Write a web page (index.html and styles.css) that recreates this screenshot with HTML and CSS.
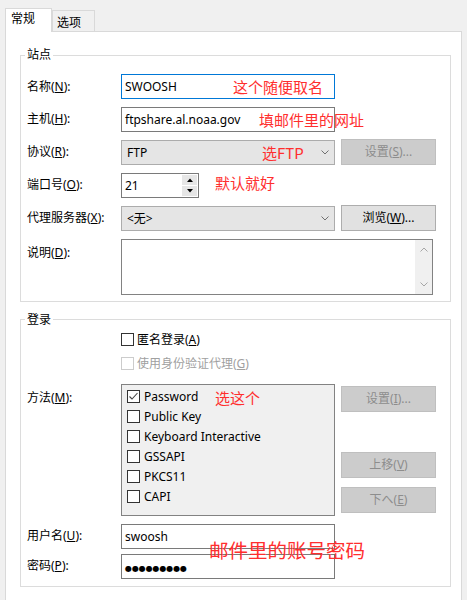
FILE: index.html
```html
<!DOCTYPE html>
<html>
	<head>
		<meta charset="UTF-8">
		<title>站点设置</title>
		<link rel="stylesheet" href="styles.css">
	</head>
	<body>
		<div class="tabs">
			<div class="tab active">常规</div>
			<div class="tab">选项</div>
		</div>

		<div class="panel">
			<!-- 站点 -->
			<fieldset class="group">
				<legend>站点</legend>
				<div class="rows site">
					<div class="row">
						<span class="lbl">名称(<u>N</u>):</span>
						<div class="field focus">SWOOSH</div>
					</div>
					<div class="row">
						<span class="lbl">主机(<u>H</u>):</span>
						<div class="field">ftpshare.al.noaa.gov</div>
					</div>
					<div class="row">
						<span class="lbl">协议(<u>R</u>):</span>
						<div class="field combo">
							<span>FTP</span>
							<svg width="8" height="5" viewBox="0 0 8 5"><polyline points="0.5,0.5 4,4 7.5,0.5" fill="none" stroke="#707070" stroke-width="1"/></svg>
						</div>
						<div class="btn off">设置(<u>S</u>)...</div>
					</div>
					<div class="row">
						<span class="lbl">端口号(<u>O</u>):</span>
						<div class="field spin">
							<span class="val">21</span>
							<span class="arrows">
								<span><svg width="6" height="4" viewBox="0 0 6 4"><polygon points="0,4 3,0.5 6,4" fill="#000"/></svg></span>
								<span><svg width="6" height="4" viewBox="0 0 6 4"><polygon points="0,0 3,3.5 6,0" fill="#000"/></svg></span>
							</span>
						</div>
					</div>
					<div class="row">
						<span class="lbl">代理服务器(<u>X</u>):</span>
						<div class="field combo">
							<span>&lt;无&gt;</span>
							<svg width="8" height="5" viewBox="0 0 8 5"><polyline points="0.5,0.5 4,4 7.5,0.5" fill="none" stroke="#707070" stroke-width="1"/></svg>
						</div>
						<div class="btn">浏览(<u>W</u>)...</div>
					</div>
					<div class="row">
						<span class="lbl top">说明(<u>D</u>):</span>
						<div class="memo">
							<div class="scroll">
								<svg width="8" height="5" viewBox="0 0 8 5"><polyline points="0.5,4.5 4,1 7.5,4.5" fill="none" stroke="#a6a6a6" stroke-width="1"/></svg>
								<svg width="8" height="5" viewBox="0 0 8 5"><polyline points="0.5,0.5 4,4 7.5,0.5" fill="none" stroke="#a6a6a6" stroke-width="1"/></svg>
							</div>
						</div>
					</div>
				</div>
			</fieldset>

			<!-- 登录 -->
			<fieldset class="group login">
				<legend>登录</legend>
				<div class="rows">
					<div class="row">
						<span></span>
						<label class="check"><span class="box"></span><span>匿名登录(<u>A</u>)</span></label>
					</div>
					<div class="row r-auth">
						<span></span>
						<label class="check off"><span class="box"></span><span>使用身份验证代理(<u>G</u>)</span></label>
					</div>
					<div class="row r-method">
						<span class="lbl top">方法(<u>M</u>):</span>
						<div class="list">
							<div class="item"><span class="box"><svg width="11" height="11" viewBox="0 0 11 11"><polyline points="1.5,5.5 4,8 9.5,2" fill="none" stroke="#444" stroke-width="1.1"/></svg></span>Password</div>
							<div class="item"><span class="box"></span>Public Key</div>
							<div class="item"><span class="box"></span>Keyboard Interactive</div>
							<div class="item"><span class="box"></span>GSSAPI</div>
							<div class="item"><span class="box"></span>PKCS11</div>
							<div class="item"><span class="box"></span>CAPI</div>
						</div>
						<div class="side">
							<div class="btn off">设置(<u>I</u>)...</div>
							<div class="btn off up">上移(<u>V</u>)</div>
							<div class="btn off down">下へ(<u>E</u>)</div>
						</div>
					</div>
					<div class="row r-user">
						<span class="lbl">用户名(<u>U</u>):</span>
						<div class="field">swoosh</div>
					</div>
					<div class="row r-pass">
						<span class="lbl">密码(<u>P</u>):</span>
						<div class="field"><span class="dots">●●●●●●●●●</span></div>
					</div>
				</div>
			</fieldset>
		</div>

		<!-- 红字备注 -->
		<span class="note n1">这个随便取名</span>
		<span class="note n2">填邮件里的网址</span>
		<span class="note n3">选FTP</span>
		<span class="note n4">默认就好</span>
		<span class="note n5">选这个</span>
		<span class="note n6">邮件里的账号密码</span>
	</body>
</html>
```

FILE: styles.css
```css
*{
	box-sizing:border-box;
}
body{
	margin:0;
	height:600px;
	overflow:hidden;
	background-color:#f0f0f0;
	font:12px "Noto Sans","Noto Sans CJK SC",sans-serif;
	color:#000;
}
u{
	text-decoration-thickness:1px;
	text-underline-offset:1px;
}

/* tabs */
.tabs{
	display:flex;
	align-items:flex-end;
	height:31px;
	padding:8px 0 0 5px;
}
.tab{
	height:21px;
	padding:4px 13px 0 4px;
	border:1px solid #d9d9d9;
	border-bottom:none;
	background-color:#f0f0f0;
	line-height:16px;
}
.tab.active{
	position:relative;
	z-index:1;
	height:24px;
	margin-bottom:-1px;
	padding:2px 16px 0 5px;
	background-color:#fff;
}
.panel{
	margin:0 5px;
	height:580px;
	padding:15px 10px 0 14px;
	background-color:#fff;
	border:1px solid #d9d9d9;
}

/* group boxes */
fieldset.group{
	margin:0;
	min-width:0;
	padding:11px 6px 6px 6px;
	border:1px solid #dcdcdc;
}
fieldset.group legend{
	padding:0 2px;
	margin-left:-2px;
	line-height:16px;
}
fieldset.login{
	margin-top:10px;
	padding-top:3px;
	padding-bottom:7px;
}
.rows{
	display:flex;
	flex-direction:column;
}
.rows.site{
	gap:7.5px;
}
.row{
	display:grid;
	grid-template-columns:88px 214px 95px;
	column-gap:6px;
	align-items:center;
}
.lbl{
	white-space:nowrap;
	line-height:16px;
}
.lbl.top{
	align-self:start;
	padding-top:6px;
}

/* inputs */
.field{
	height:25px;
	padding:0 3px;
	line-height:23px;
	border:1px solid #7a7a7a;
	background-color:#fff;
	white-space:nowrap;
}
.field.focus{
	border-color:#0078d7;
}
.combo{
	display:flex;
	justify-content:space-between;
	align-items:center;
	padding:0 5px 0 5px;
	background-color:#e5e5e5;
	border-color:#acacac;
}
.spin{
	display:flex;
	width:78px;
	padding:0;
}
.spin .val{
	flex:1;
	padding-left:3px;
}
.spin .arrows{
	display:flex;
	flex-direction:column;
	width:15px;
	margin:1px 1px 1px 0;
	gap:1px;
}
.spin .arrows span{
	flex:1;
	display:flex;
	align-items:center;
	justify-content:center;
	background-color:#e6e6e6;
}
.memo{
	grid-column:2 / 4;
	width:312px;
	height:56px;
	display:flex;
	justify-content:flex-end;
	border:1px solid #828282;
	background-color:#fff;
}
.scroll{
	width:17px;
	display:flex;
	flex-direction:column;
	justify-content:space-between;
	align-items:center;
	padding:7px 0 7px;
	background-color:#f0f0f0;
}

/* buttons */
.btn{
	height:26px;
	line-height:24px;
	text-align:center;
	border:1px solid #adadad;
	background-color:#e1e1e1;
	white-space:nowrap;
}
.btn.off{
	background-color:#cccccc;
	border-color:#bfbfbf;
	color:#8d8d8d;
}

/* check boxes */
.check{
	grid-column:2 / 4;
	display:flex;
	align-items:center;
	gap:3px;
	height:17px;
	white-space:nowrap;
}
.check.off{
	color:#a0a0a0;
}
.box{
	flex:none;
	width:13px;
	height:13px;
	border:1px solid #333;
	background-color:#fff;
}
.box svg{
	display:block;
}
.check.off .box{
	border-color:#cccccc;
}
.r-auth{
	margin-top:7px;
}
.r-method{
	margin-top:12px;
}
.r-user{
	margin-top:8px;
}
.r-pass{
	margin-top:5px;
}
.list{
	height:132px;
	padding:2px 0 0 5px;
	border:1px solid #828282;
	background-color:#f0f0f0;
}
.item{
	display:flex;
	align-items:center;
	gap:4px;
	height:20px;
}
.side{
	align-self:start;
	display:flex;
	flex-direction:column;
	padding-top:2px;
}
.side .up{
	margin-top:40px;
}
.side .down{
	margin-top:9px;
}
.dots{
	font-family:"DejaVu Sans",sans-serif;
	font-size:8px;
	letter-spacing:-0.1px;
}

/* red notes written over the form */
.note{
	position:absolute;
	color:#ff2e2e;
	font-family:"Noto Sans CJK SC",sans-serif;
	font-size:15px;
	line-height:15px;
	white-space:nowrap;
}
.n1{left:233px;top:79px;}
.n2{left:259px;top:112px;}
.n3{left:262px;top:145px;}
.n4{left:215px;top:175px;}
.n5{left:215px;top:390px;}
.n6{left:209px;top:540px;font-size:19.5px;line-height:20px;}
```
